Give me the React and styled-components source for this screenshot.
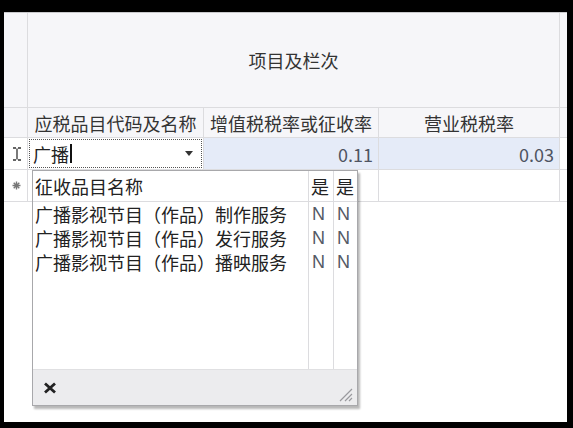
import React from "react";
import styled, { createGlobalStyle } from "styled-components";

const Global = createGlobalStyle`
  html, body {
    margin: 0;
    padding: 0;
    background: #000;
  }
  body {
    width: 573px;
    height: 428px;
    overflow: hidden;
    font-family: "Noto Sans CJK SC", "Noto Sans", sans-serif;
  }
`;

const Frame = styled.div`
  width: 573px;
  height: 428px;
  box-sizing: border-box;
  padding: 12px 6px 6px 4px;
`;

const Screen = styled.div`
  position: relative;
  height: 100%;
  background: #fff;
  overflow: hidden;
`;

const Grid = styled.div`
  display: grid;
  grid-template-columns: 24px 176px 175px 181px 1fr;
  grid-template-rows: 95px 30px 32px 32px;
  border-top: 1px solid #c9c9cc;
`;

const Cell = styled.div`
  box-sizing: border-box;
  border-right: 1px solid #dcdcdf;
  border-bottom: 1px solid #dcdcdf;
  background: ${(p) => (p.$head ? "#f6f6f9" : p.$sel ? "#e5ebf8" : "#fff")};
  color: ${(p) => (p.$num ? "#4f5462" : "#333")};
  font-size: 18px;
  line-height: 1;
  display: flex;
  align-items: center;
  justify-content: ${(p) => p.$align || "center"};
  padding: 0 5px;
  grid-column: ${(p) => p.$span || "auto"};
  white-space: nowrap;
`;

const Stub = styled(Cell)`
  padding: 0 0 0 2px;
  background: ${(p) => (p.$head ? "#f6f6f9" : "#fff")};
`;

const EdgeCol = styled(Cell)`
  padding: 0;
  border-right: none;
  display: grid;
  grid-template-rows: 31px 1fr;
  align-items: stretch;
  & > span:first-child {
    border-bottom: 1px solid #dcdcdf;
  }
`;

const EditCell = styled.div`
  box-sizing: border-box;
  border-right: 1px solid #dcdcdf;
  border-bottom: 1px solid #dcdcdf;
  padding: 1px;
`;

const EditBox = styled.div`
  height: 100%;
  box-sizing: border-box;
  border: 1px dotted #555;
  display: flex;
  align-items: center;
  padding: 0 8px 0 3px;
  font-size: 18px;
  color: #222;
`;

const Caret = styled.span`
  display: inline-block;
  width: 2px;
  height: 19px;
  background: #111;
  margin-left: 1px;
`;

const Arrow = styled.span`
  margin-left: auto;
  width: 0;
  height: 0;
  border-left: 4px solid transparent;
  border-right: 4px solid transparent;
  border-top: 5px solid #333;
`;

const Popup = styled.div`
  position: absolute;
  left: 28px;
  top: 158px;
  width: 326px;
  height: 236px;
  box-sizing: border-box;
  border: 1px solid #a8a8ab;
  background: #fff;
  box-shadow: 2px 3px 2px rgba(0, 0, 0, 0.28);
  display: flex;
  flex-direction: column;
`;

const ListBody = styled.div`
  flex: 1;
  display: grid;
  grid-template-columns: 1fr 25px 23px;
  grid-template-rows: 31px 24px 24px 24px 1fr;
`;

const LCell = styled.div`
  box-sizing: border-box;
  border-right: ${(p) => (p.$last ? "none" : "1px solid #dcdcdf")};
  border-bottom: ${(p) => (p.$head ? "1px solid #dcdcdf" : "none")};
  font-size: 18px;
  line-height: 1;
  color: ${(p) => (p.$flag ? "#555a66" : "#222")};
  display: flex;
  align-items: center;
  padding: 0 0 0 ${(p) => (p.$flag ? "3px" : "2px")};
  white-space: nowrap;
  font-family: ${(p) =>
    p.$flag ? '"Liberation Sans", "Noto Sans CJK SC", sans-serif' : "inherit"};
`;

const Footer = styled.div`
  height: 35px;
  flex: none;
  background: #ececee;
  border-top: 1px solid #e0e0e2;
  display: flex;
  align-items: center;
  justify-content: space-between;
  padding: 0 4px 0 10px;
`;

const Grip = styled.svg`
  align-self: flex-end;
  margin-bottom: 3px;
`;

const header = ["应税品目代码及名称", "增值税税率或征收率", "营业税税率"];
const items = [
  "广播影视节目（作品）制作服务",
  "广播影视节目（作品）发行服务",
  "广播影视节目（作品）播映服务",
];

const App = () => {
  return (
    <Frame>
      <Global />
      <Screen>
        <Grid>
          <Stub $head />
          <Cell $head $span="2 / 5">项目及栏次</Cell>
          <EdgeCol $head>
            <span />
            <span />
          </EdgeCol>

          <Stub $head />
          {header.map((h) => (
            <Cell $head key={h}>
              {h}
            </Cell>
          ))}
          <Cell $head style={{ borderRight: "none" }} />

          <Stub>
            <svg width="10" height="14" viewBox="0 0 10 14">
              <path d="M1 1h3M6 1h3M5 1.5v11M1 13h3M6 13h3" stroke="#333" strokeWidth="1.3" fill="none" />
            </svg>
          </Stub>
          <EditCell>
            <EditBox>
              广播
              <Caret />
              <Arrow />
            </EditBox>
          </EditCell>
          <Cell $sel $num $align="flex-end">0.11</Cell>
          <Cell $sel $num $align="flex-end">0.03</Cell>
          <Cell style={{ borderRight: "none" }} />

          <Stub>
            <svg width="9" height="9" viewBox="0 0 9 9">
              <path d="M4.5 0.5v8M0.5 4.5h8M1.7 1.7l5.6 5.6M7.3 1.7l-5.6 5.6" stroke="#777" strokeWidth="1.4" />
            </svg>
          </Stub>
          <Cell />
          <Cell />
          <Cell />
          <Cell style={{ borderRight: "none" }} />
        </Grid>

        <Popup>
          <ListBody>
            <LCell $head>征收品目名称</LCell>
            <LCell $head>是</LCell>
            <LCell $head $last>是</LCell>
            {items.map((it) => (
              <React.Fragment key={it}>
                <LCell>{it}</LCell>
                <LCell $flag>N</LCell>
                <LCell $flag $last>N</LCell>
              </React.Fragment>
            ))}
            <LCell />
            <LCell />
            <LCell $last />
          </ListBody>
          <Footer>
            <svg width="14" height="12" viewBox="0 0 14 12">
              <path d="M2 1.5l10 9M12 1.5l-10 9" stroke="#222" strokeWidth="2.8" />
            </svg>
            <Grip width="16" height="16" viewBox="0 0 16 16">
              <path d="M3 15L15 3M8 15L15 8M12 15l3-3" stroke="#9a9a9e" strokeWidth="1.2" />
            </Grip>
          </Footer>
        </Popup>
      </Screen>
    </Frame>
  );
};

export default App;
